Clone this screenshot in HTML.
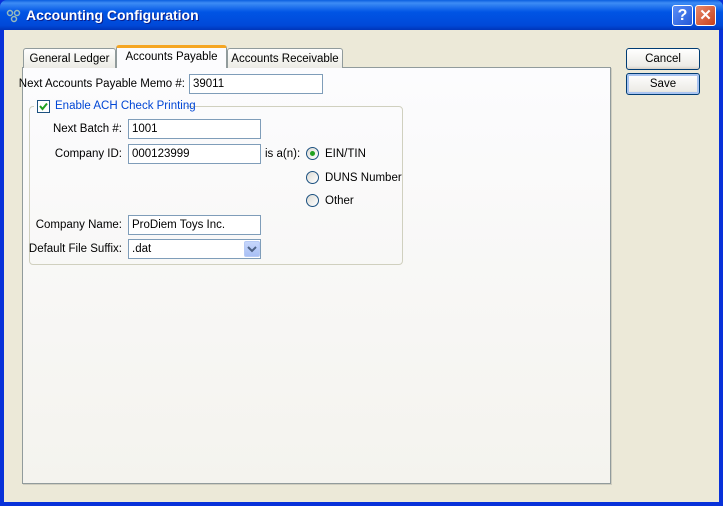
<!DOCTYPE html>
<html><head><style>
*{box-sizing:border-box;margin:0;padding:0}
body{width:723px;height:506px;overflow:hidden;font-family:"Liberation Sans",sans-serif;font-size:11.5px;color:#000;position:relative;background:#0831d9}
.abs{position:absolute;white-space:nowrap}
.title{left:0;top:0;width:723px;height:30px;background:linear-gradient(#0a5fe0 0%,#3d8cf5 10%,#0055e5 40%,#0048d8 85%,#0035b8 100%);border-radius:7px 7px 0 0}
.title span{position:absolute;left:26px;top:7px;color:#fff;font-weight:bold;font-size:14px;font-family:"Liberation Sans",sans-serif;text-shadow:1px 1px #0a1e8a}
.client{left:4px;top:30px;width:715px;height:472px;background:#ece9d8}
.panel{left:22px;top:67px;width:589px;height:417px;background:linear-gradient(#fcfcfe,#f4f3ee);border:1px solid #919b9c;box-shadow:1px 1px 0 #d0cec0}
.tab{height:20px;border:1px solid #919b9c;border-bottom:none;border-radius:3px 3px 0 0;background:linear-gradient(#fff,#ecebe5);text-align:center;line-height:19px}
.inp{height:20px;border:1px solid #7f9db9;background:#fff;padding-left:3px;line-height:18px}
.lbl{text-align:right}
.btn{left:626px;width:74px;height:22px;border:1px solid #003c74;border-radius:3px;background:linear-gradient(#fff,#ecebe6 85%,#d6d0c5);text-align:center;line-height:20px}
.radio{width:13px;height:13px;border:1px solid #1c5180;border-radius:50%;background:linear-gradient(135deg,#dcdbd5,#fff)}
</style></head><body>
<div class="abs title"><span>Accounting Configuration</span>
<svg class="abs" style="left:6px;top:9px" width="16" height="14"><circle cx="4" cy="4" r="2.5" fill="none" stroke="#9bb" stroke-width="1.5"/><circle cx="11" cy="4" r="2.5" fill="none" stroke="#9bb" stroke-width="1.5"/><circle cx="8" cy="10" r="2.5" fill="none" stroke="#9bb" stroke-width="1.5"/></svg>
<div class="abs" style="left:672px;top:5px;width:21px;height:21px;border:1px solid #fff;border-radius:3px;background:linear-gradient(135deg,#5a8ef7,#2459d8);color:#fff;font:bold 16px 'Liberation Sans',sans-serif;text-align:center;line-height:19px">?</div>
<div class="abs" style="left:695px;top:5px;width:21px;height:21px;border:1px solid #fff;border-radius:3px;background:linear-gradient(135deg,#e88a6a,#c8401c);color:#fff;font:bold 15px 'Liberation Sans',sans-serif;text-align:center;line-height:19px">✕</div>
</div>
<div class="abs client"></div>
<div class="abs panel"></div>
<div class="abs tab" style="left:23px;top:48px;width:93px;line-height:20px">General Ledger</div>
<div class="abs tab" style="left:227px;top:48px;width:116px;line-height:20px">Accounts Receivable</div>
<div class="abs tab" style="left:116px;top:45px;width:111px;height:23px;background:#fcfcfe;border-top:3px solid #f5a623;line-height:19px">Accounts Payable</div>
<div class="abs lbl" style="left:14px;top:78px;width:171px">Next Accounts Payable Memo #:</div>
<div class="abs inp" style="left:189px;top:74px;width:134px">39011</div>
<div class="abs" style="left:29px;top:106px;width:374px;height:159px;border:1px solid #d0d0bf;border-radius:4px"></div>
<div class="abs" style="left:34px;top:99px;width:152px;height:14px;background:#fbfbfc"></div>
<div class="abs" style="left:37px;top:100px;width:13px;height:13px;border:1px solid #1c5180;background:#fff"></div>
<svg class="abs" style="left:38px;top:101px" width="11" height="11"><path d="M2 5 L4.5 8 L9 2.5" stroke="#21a121" stroke-width="2" fill="none"/></svg>
<div class="abs" style="left:55px;top:100px;color:#0046d5">Enable ACH Check Printing</div>
<div class="abs lbl" style="left:18px;top:123px;width:104px">Next Batch #:</div>
<div class="abs inp" style="left:128px;top:119px;width:133px">1001</div>
<div class="abs lbl" style="left:18px;top:148px;width:104px">Company ID:</div>
<div class="abs inp" style="left:128px;top:144px;width:133px">000123999</div>
<div class="abs" style="left:265px;top:148px">is a(n):</div>
<div class="abs radio" style="left:306px;top:147px"></div>
<div class="abs" style="left:310px;top:151px;width:5px;height:5px;border-radius:50%;background:#21a121"></div>
<div class="abs" style="left:325px;top:148px">EIN/TIN</div>
<div class="abs radio" style="left:306px;top:171px"></div>
<div class="abs" style="left:325px;top:172px">DUNS Number</div>
<div class="abs radio" style="left:306px;top:194px"></div>
<div class="abs" style="left:325px;top:195px">Other</div>
<div class="abs lbl" style="left:18px;top:219px;width:104px">Company Name:</div>
<div class="abs inp" style="left:128px;top:215px;width:133px">ProDiem Toys Inc.</div>
<div class="abs lbl" style="left:18px;top:243px;width:104px">Default File Suffix:</div>
<div class="abs inp" style="left:128px;top:239px;width:133px">.dat</div>
<div class="abs" style="left:244px;top:241px;width:16px;height:16px;border-radius:2px;background:linear-gradient(#c6d6fb,#a9c0f5);border:1px solid #b7caf5"></div>
<svg class="abs" style="left:247px;top:245px" width="10" height="8"><path d="M1 2 L5 6 L9 2" stroke="#4d6185" stroke-width="2" fill="none"/></svg>
<div class="abs btn" style="top:48px">Cancel</div>
<div class="abs btn" style="top:73px;box-shadow:inset 0 0 0 2px #a9c4f1">Save</div>
</body></html>
